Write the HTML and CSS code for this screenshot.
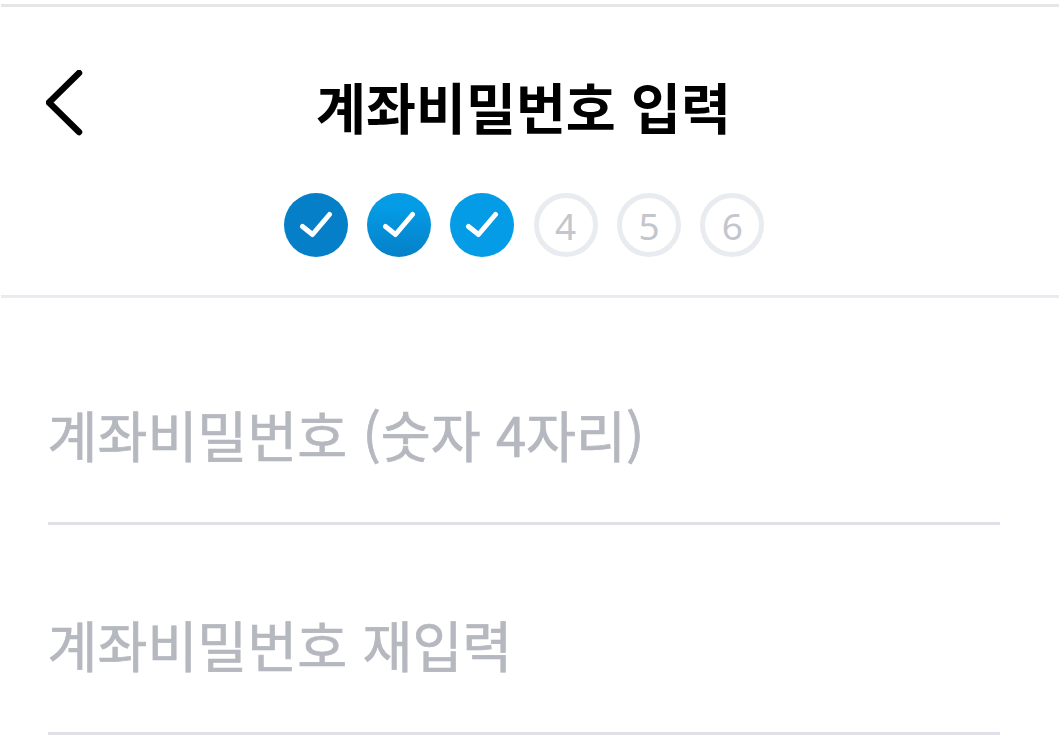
FILE: index.html
```html
<!DOCTYPE html>
<html lang="ko">
<head>
<meta charset="utf-8">
<title>계좌비밀번호 입력</title>
<link rel="stylesheet" href="styles.css">
</head>
<body>
<div class="screen">
  <header class="header">
    <div class="titlebar">
      <button class="back" aria-label="뒤로">
        <svg width="38" height="66" viewBox="0 0 38 66"><path d="M33 3 L3 32.5 L33 62" fill="none" stroke="#000" stroke-width="6.5" stroke-linecap="round" stroke-linejoin="round"/></svg>
      </button>
      <h1 class="title">계좌비밀번호 입력</h1>
    </div>
    <ol class="steps">
      <li class="step done s1"><svg width="36" height="28" viewBox="0 0 36 28"><path d="M4.5 15.5 L14.5 23.5 L31.5 3.5" fill="none" stroke="#fff" stroke-width="5" stroke-linecap="round" stroke-linejoin="round"/></svg></li>
      <li class="step done s2"><svg width="36" height="28" viewBox="0 0 36 28"><path d="M4.5 15.5 L14.5 23.5 L31.5 3.5" fill="none" stroke="#fff" stroke-width="5" stroke-linecap="round" stroke-linejoin="round"/></svg></li>
      <li class="step done s3"><svg width="36" height="28" viewBox="0 0 36 28"><path d="M4.5 15.5 L14.5 23.5 L31.5 3.5" fill="none" stroke="#fff" stroke-width="5" stroke-linecap="round" stroke-linejoin="round"/></svg></li>
      <li class="step">4</li>
      <li class="step">5</li>
      <li class="step">6</li>
    </ol>
  </header>
  <main class="form">
    <div class="field">계좌비밀번호 (숫자 4자리)</div>
    <div class="field">계좌비밀번호 재입력</div>
  </main>
</div>
</body>
</html>
```
FILE: styles.css
```css
* { box-sizing: border-box; }
html, body { margin: 0; padding: 0; background: #fff; }
body { font-family: "Noto Sans CJK KR", "Noto Sans", sans-serif; overflow: hidden; }
.screen { width: 1059px; height: 737px; padding-top: 4px; overflow: hidden; }
.header { border-top: 3px solid #e6e6e6; border-bottom: 3px solid #e8ebef; margin-left: 1px; height: 294px; }
.titlebar { display: flex; align-items: center; justify-content: center; height: 186px; position: relative; padding: 12px 13px 0 0; }
.back { position: absolute; left: 45px; top: 63px; padding: 0; border: 0; background: none; display: flex; }
.title { margin: 0; font-size: 54.3px; font-weight: 700; line-height: 70px; color: #000; }
.steps { list-style: none; margin: 0; padding: 0 12px 0 0; display: flex; justify-content: center; gap: 19.33px; }
.step { width: 64px; height: 64px; border-radius: 50%; border: 5px solid #e8ebef; color: #c3c6cc; font-family: "Noto Sans", sans-serif; font-size: 37px; padding-top: 1px; display: flex; align-items: center; justify-content: center; line-height: 1; }
.step.done { border: 0; padding-top: 0; }
.s1 { background: #0580c8; }
.s2 { background: linear-gradient(#049ce6 20%, #0580c8); }
.s3 { background: #049ce6; }
.form { padding: 0 59px 0 47.5px; }
.field { height: 210px; border-bottom: 3px solid #dfe0e8; color: #b5b8bf; font-weight: 400; -webkit-text-stroke: 0.7px #b5b8bf; font-size: 54.3px; line-height: 70px; display: flex; align-items: flex-end; padding-bottom: 53px; }
.field:first-child { height: 227px; }
```
